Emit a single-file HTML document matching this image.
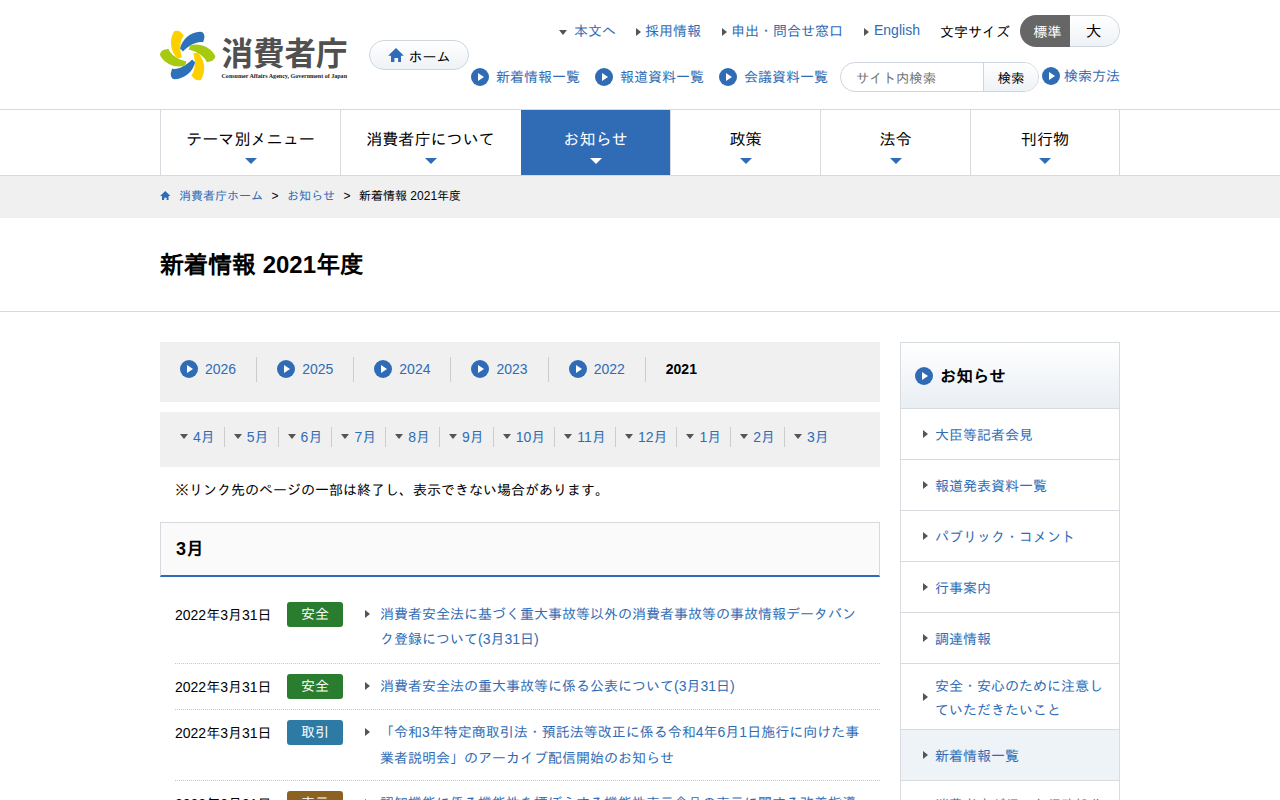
<!DOCTYPE html>
<html lang="ja">
<head>
<meta charset="utf-8">
<title>新着情報 2021年度 | 消費者庁</title>
<style>
*{box-sizing:border-box;margin:0;padding:0}
html,body{width:1280px;height:800px;overflow:hidden;background:#fff}
body{font-family:"Liberation Sans","IPAGothic","Noto Sans CJK JP",sans-serif;font-size:14px;color:#000;position:relative}
a{color:#2f6cb5;text-decoration:none}
.abs{position:absolute}
/* header */
#header{position:absolute;left:0;top:0;width:1280px;height:110px;border-bottom:1px solid #d6dade;background:#fff}
#logo{position:absolute;left:160px;top:28px;width:190px;height:56px}
#home{position:absolute;left:369px;top:40px;width:100px;height:30px;border:1px solid #cfd5dc;border-radius:15px;background:linear-gradient(#fff,#eef2f6);font-size:14px;line-height:28px;color:#000}
#home svg{position:absolute;left:18px;top:7px}
#home span{position:absolute;left:38.5px;top:2px}
.tl{position:absolute;top:21px;font-size:14px;line-height:20px;white-space:nowrap}
.tl i{display:inline-block;width:0;height:0;border-style:solid;vertical-align:middle;margin-right:4px}
.tl i.r{border-width:4px 0 4px 5px;border-color:transparent transparent transparent #555}
.tl i.d{border-width:5px 4px 0 4px;border-color:#555 transparent transparent transparent;margin-right:7px}
#fs{position:absolute;left:1020px;top:15px;width:100px;height:32px;border-radius:16px;overflow:hidden}
#fs .s{position:absolute;left:0;top:0;width:50px;height:32px;background:#666;color:#fff;font-size:14px;line-height:32px;text-align:center;padding-left:5px;padding-top:1px}
#fs .l{position:absolute;left:50px;top:0;width:50px;height:32px;border:1px solid #cfd5dc;border-left:0;border-radius:0 16px 16px 0;background:linear-gradient(#fff,#eef2f6);color:#000;font-size:16px;line-height:31px;text-align:center;padding-right:2px}
.sl{position:absolute;top:67px;font-size:14px;line-height:20px;white-space:nowrap}
.sl .circ{top:-1px}
.circ{display:inline-block;width:18px;height:18px;border-radius:9px;background:#2f6cb5;position:relative;vertical-align:middle}
.circ:after{content:"";position:absolute;left:7px;top:5px;border-style:solid;border-width:4px 0 4px 6px;border-color:transparent transparent transparent #fff}
#search{position:absolute;left:840px;top:62px;width:199px;height:30px;border:1px solid #cfd5dc;border-radius:15px;overflow:hidden;background:#fff}
#search .ph{position:absolute;left:15px;top:6px;font-size:13.33px;line-height:20px;color:#757575}
#search .btn{position:absolute;left:142px;top:-1px;width:57px;height:30px;border-left:1px solid #cfd5dc;background:linear-gradient(#fff,#eef2f6);font-size:13.33px;line-height:33px;text-align:center;color:#000;padding-right:2px}
/* nav */
#nav{position:absolute;left:0;top:110px;width:1280px;height:66px;border-bottom:1px solid #d6dade}
#nav .it{position:absolute;top:0;height:65px;border-left:1px solid #d6dade;text-align:center;font-size:16.1px;line-height:24px;padding-top:17px;color:#000}
#nav .it:after{content:"";position:absolute;left:50%;margin-left:-6px;top:48px;border-style:solid;border-width:6px 6px 0 6px;border-color:#2f6cb5 transparent transparent transparent}
#nav .it.on{background:#2f6cb5;color:#fff}
#nav .it.on:before{content:"";position:absolute;left:-1px;top:0;width:1px;height:65px;background:#fff}
#nav .it.on:after{border-top-color:#fff}
/* breadcrumb */
#bc{position:absolute;left:0;top:176px;width:1280px;height:42px;background:#f0f0f0;font-size:12px;line-height:20px}
#bc .in{position:absolute;left:160px;top:10px;white-space:nowrap}
#bc svg{vertical-align:0px;margin-right:8.5px}
#bc .sep{margin:0 8.5px;color:#000}
h1{position:absolute;left:160px;top:247px;font-size:24px;line-height:36px;font-weight:bold}
#hr{position:absolute;left:0;top:311px;width:1280px;height:1px;background:#d6dade}
/* year */
#years{position:absolute;left:160px;top:342px;width:720px;height:60px;background:#f0f0f0;white-space:nowrap;font-size:0}
#years .y{display:inline-block;vertical-align:top;margin-top:15px;height:25px;padding:0 20px;border-right:1px solid #ccc;font-size:14px;line-height:25px;position:relative}
#years .y a{display:inline-block;padding-left:25px}
#years .y .circ{position:absolute;left:20px;top:3px}
#years .y.cur{border:0;font-weight:bold;color:#000}
#months{position:absolute;left:160px;top:412px;width:720px;height:55px;background:#f0f0f0;white-space:nowrap;font-size:0;padding-left:11px}
#months .m{display:inline-block;vertical-align:top;margin-top:15px;height:20px;padding:0 9px;border-right:1px solid #ccc;font-size:14px;line-height:20px;position:relative}
#months .m a{display:inline-block;padding-left:13px}
#months .m i{position:absolute;left:9px;top:7px;border-style:solid;border-width:5px 4px 0 4px;border-color:#555 transparent transparent transparent}
#months .m.last{border:0}
#note{position:absolute;left:175px;top:480px;font-size:14px;line-height:20px}
#h2{position:absolute;left:160px;top:522px;width:720px;height:55px;border:1px solid #d6dade;border-bottom:2px solid #2f6cb5;background:#fafafa;font-size:18px;font-weight:bold;line-height:26px;padding:13px 0 0 15px}
.row{position:absolute;left:175px;width:705px;border-bottom:1px dotted #c3c8d0}
.row .d{position:absolute;left:0;top:1px;font-size:14px;line-height:20px}
.row .tag{position:absolute;left:112px;width:56px;height:25px;border-radius:3px;color:#fff;font-size:14px;line-height:25px;text-align:center}
.row .tx{position:absolute;left:205px;width:485px;font-size:14px;line-height:25.2px}
.row .ar{position:absolute;left:190px;border-style:solid;border-width:4px 0 4px 5px;border-color:transparent transparent transparent #555}
/* side */
#side{position:absolute;left:900px;top:342px;width:220px;height:470px;border:1px solid #d8dce0;background:#fff}
#side .hd{position:absolute;left:0;top:0;width:218px;height:66px;background:linear-gradient(#fff,#e9eef3);border-bottom:1px solid #d8dce0;font-size:16.4px;font-weight:bold;line-height:24px}
#side .hd .circ{position:absolute;left:14px;top:24px}
#side .hd span{position:absolute;left:39px;top:21px}
#side .it{position:absolute;left:0;width:218px;border-bottom:1px solid #d8dce0;font-size:14px;line-height:23px}
#side .it a{position:absolute;left:34px;white-space:nowrap}
#side .it i{position:absolute;left:22px;border-style:solid;border-width:4px 0 4px 5px;border-color:transparent transparent transparent #555}
</style>
</head>
<body>
<div id="header">
  <svg id="logo" width="190" height="56" viewBox="0 0 190 56"><g transform="translate(27.6,27.5) scale(1.025)"><path transform="rotate(0)" d="M-14,-22 L-12.8,-23.8 C-11,-24.6 -9,-24.2 -7.2,-23.2 L-3.6,-19.6 C-7.6,-14.5 -7.9,-6.5 -5.6,1.9 L-9.6,2.9 C-16.4,-3.5 -18.2,-13.5 -14,-22 Z" fill="#fdd000"/><path transform="rotate(60)" d="M-14,-22 L-12.8,-23.8 C-11,-24.6 -9,-24.2 -7.2,-23.2 L-3.6,-19.6 C-7.6,-14.5 -7.9,-6.5 -5.6,1.9 L-9.6,2.9 C-16.4,-3.5 -18.2,-13.5 -14,-22 Z" fill="#2d72b9"/><path transform="rotate(120)" d="M-14,-22 L-12.8,-23.8 C-11,-24.6 -9,-24.2 -7.2,-23.2 L-3.6,-19.6 C-7.6,-14.5 -7.9,-6.5 -5.6,1.9 L-9.6,2.9 C-16.4,-3.5 -18.2,-13.5 -14,-22 Z" fill="#a6ca10"/><path transform="rotate(180)" d="M-14,-22 L-12.8,-23.8 C-11,-24.6 -9,-24.2 -7.2,-23.2 L-3.6,-19.6 C-7.6,-14.5 -7.9,-6.5 -5.6,1.9 L-9.6,2.9 C-16.4,-3.5 -18.2,-13.5 -14,-22 Z" fill="#fdd000"/><path transform="rotate(240)" d="M-14,-22 L-12.8,-23.8 C-11,-24.6 -9,-24.2 -7.2,-23.2 L-3.6,-19.6 C-7.6,-14.5 -7.9,-6.5 -5.6,1.9 L-9.6,2.9 C-16.4,-3.5 -18.2,-13.5 -14,-22 Z" fill="#2d72b9"/><path transform="rotate(300)" d="M-14,-22 L-12.8,-23.8 C-11,-24.6 -9,-24.2 -7.2,-23.2 L-3.6,-19.6 C-7.6,-14.5 -7.9,-6.5 -5.6,1.9 L-9.6,2.9 C-16.4,-3.5 -18.2,-13.5 -14,-22 Z" fill="#a6ca10"/></g><text x="61.5" y="37.3" font-family="'Noto Sans CJK JP',sans-serif" font-weight="bold" font-size="32" fill="#505050" textLength="126" lengthAdjust="spacingAndGlyphs">消費者庁</text><text x="61.5" y="50" font-family="'Liberation Serif',serif" font-weight="bold" font-size="6.3" fill="#231815" textLength="125.5" lengthAdjust="spacingAndGlyphs">Consumer Affairs Agency, Government of Japan</text></svg>
  <div id="home"><svg width="16" height="14" viewBox="0 0 16 14"><path d="M8 0 L15.9 7.7 H13 V14 H10.1 V10.1 H6.4 V14 H3 V7.7 H0.1 Z" fill="#2f6cb5"/></svg><span>ホーム</span></div>
  <div class="tl" style="left:559px"><i class="d"></i><a>本文へ</a></div>
  <div class="tl" style="left:636px"><i class="r"></i><a>採用情報</a></div>
  <div class="tl" style="left:722px"><i class="r"></i><a>申出・問合せ窓口</a></div>
  <div class="tl" style="left:864px;top:20px"><i class="r" style="margin-right:5px;position:relative;top:1px"></i><a>English</a></div>
  <div class="tl" style="left:940px;top:22px;color:#000">文字サイズ</div>
  <div id="fs"><div class="s">標準</div><div class="l">大</div></div>
  <div class="sl" style="left:471px"><span class="circ"></span> <a style="margin-left:3px">新着情報一覧</a></div>
  <div class="sl" style="left:595px"><span class="circ"></span> <a style="margin-left:3px">報道資料一覧</a></div>
  <div class="sl" style="left:719px"><span class="circ"></span> <a style="margin-left:3px">会議資料一覧</a></div>
  <div id="search"><span class="ph">サイト内検索</span><div class="btn">検索</div></div>
  <div class="sl" style="left:1042px;top:66px"><span class="circ"></span><a style="margin-left:4px">検索方法</a></div>
</div>
<div id="nav">
  <div class="it" style="left:160px;width:180px">テーマ別メニュー</div>
  <div class="it" style="left:340px;width:180px">消費者庁について</div>
  <div class="it on" style="left:520px;width:150px">お知らせ</div>
  <div class="it" style="left:670px;width:150px">政策</div>
  <div class="it" style="left:820px;width:150px">法令</div>
  <div class="it" style="left:970px;width:150px;border-right:1px solid #d6dade">刊行物</div>
</div>
<div id="bc"><div class="in"><svg width="10.5" height="9.2" viewBox="0 0 16 14"><path d="M8 0 L15.9 7.7 H13 V14 H10.1 V10.1 H6.4 V14 H3 V7.7 H0.1 Z" fill="#2f6cb5"/></svg><a>消費者庁ホーム</a><span class="sep">&gt;</span><a>お知らせ</a><span class="sep">&gt;</span><span>新着情報 2021年度</span></div></div>
<h1>新着情報 2021年度</h1>
<div id="hr"></div>
<div id="years"><div class="y"><span class="circ"></span><a>2026</a></div><div class="y"><span class="circ"></span><a>2025</a></div><div class="y"><span class="circ"></span><a>2024</a></div><div class="y"><span class="circ"></span><a>2023</a></div><div class="y"><span class="circ"></span><a>2022</a></div><div class="y cur">2021</div></div>
<div id="months"><div class="m"><i></i><a>4月</a></div><div class="m"><i></i><a>5月</a></div><div class="m"><i></i><a>6月</a></div><div class="m"><i></i><a>7月</a></div><div class="m"><i></i><a>8月</a></div><div class="m"><i></i><a>9月</a></div><div class="m"><i></i><a>10月</a></div><div class="m"><i></i><a>11月</a></div><div class="m"><i></i><a>12月</a></div><div class="m"><i></i><a>1月</a></div><div class="m"><i></i><a>2月</a></div><div class="m last"><i></i><a>3月</a></div></div>
<div id="note">※リンク先のページの一部は終了し、表示できない場合があります。</div>
<div id="h2">3月</div>
<div class="row" style="top:604px;height:60px"><span class="d">2022年3月31日</span><span class="tag" style="top:-2px;background:#2a7d2e">安全</span><i class="ar" style="top:6px"></i><a class="tx" style="top:-2px">消費者安全法に基づく重大事故等以外の消費者事故等の事故情報データバンク登録について(3月31日)</a></div>
<div class="row" style="top:676px;height:34px"><span class="d">2022年3月31日</span><span class="tag" style="top:-2px;background:#2a7d2e">安全</span><i class="ar" style="top:6px"></i><a class="tx" style="top:-2px">消費者安全法の重大事故等に係る公表について(3月31日)</a></div>
<div class="row" style="top:722px;height:59px"><span class="d">2022年3月31日</span><span class="tag" style="top:-2px;background:#2d7ba5">取引</span><i class="ar" style="top:6px"></i><a class="tx" style="top:-1.6px">「令和3年特定商取引法・預託法等改正に係る令和4年6月1日施行に向けた事業者説明会」のアーカイブ配信開始のお知らせ</a></div>
<div class="row" style="top:793px;height:60px;border:0"><span class="d">2022年3月31日</span><span class="tag" style="top:-2px;background:#8b6222">表示</span><i class="ar" style="top:6px"></i><a class="tx" style="top:-2px">認知機能に係る機能性を標ぼうする機能性表示食品の表示に関する改善指導及び一般消費者等への注意喚起について</a></div>
<div id="side">
  <div class="hd"><span class="circ"></span><span>お知らせ</span></div>
  <div class="it" style="top:66px;height:51px"><i style="top:21px"></i><a style="top:15px">大臣等記者会見</a></div>
  <div class="it" style="top:117px;height:51px"><i style="top:21px"></i><a style="top:15px">報道発表資料一覧</a></div>
  <div class="it" style="top:168px;height:51px"><i style="top:21px"></i><a style="top:15px">パブリック・コメント</a></div>
  <div class="it" style="top:219px;height:51px"><i style="top:21px"></i><a style="top:15px">行事案内</a></div>
  <div class="it" style="top:270px;height:51px"><i style="top:21px"></i><a style="top:15px">調達情報</a></div>
  <div class="it" style="top:321px;height:66px"><i style="top:29px"></i><a style="top:11px;line-height:23.8px">安全・安心のために注意し<br>ていただきたいこと</a></div>
  <div class="it" style="top:387px;height:51px;background:#eef3f8"><i style="top:21px"></i><a style="top:15px">新着情報一覧</a></div>
  <div class="it" style="top:438px;height:66px;border:0"><i style="top:29px"></i><a style="top:13px;line-height:23.8px">消費者庁が行った行政処分<br>・指導等</a></div>
</div>
</body>
</html>
